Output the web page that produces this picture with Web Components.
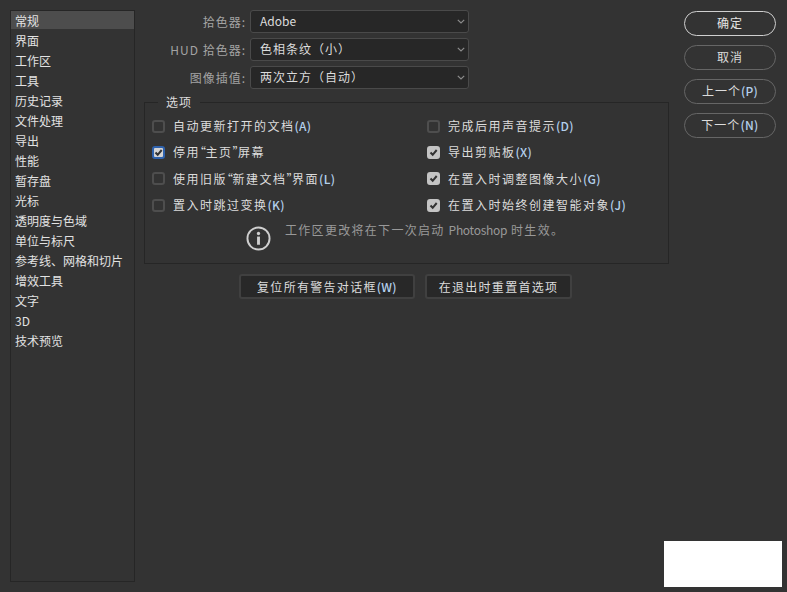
<!DOCTYPE html>
<html lang="zh-CN">
<head>
<meta charset="utf-8">
<title>首选项</title>
<style>
html,body{margin:0;padding:0;height:100%;background:#333}
body{font:12px/16px "Noto Sans CJK SC","Noto Sans",sans-serif;color:#d4d4d4;overflow:hidden}
</style>
</head>
<body>
<pref-dialog>
  <pref-nav slot="nav">
    <pref-nav-item selected>常规</pref-nav-item>
    <pref-nav-item>界面</pref-nav-item>
    <pref-nav-item>工作区</pref-nav-item>
    <pref-nav-item>工具</pref-nav-item>
    <pref-nav-item>历史记录</pref-nav-item>
    <pref-nav-item>文件处理</pref-nav-item>
    <pref-nav-item>导出</pref-nav-item>
    <pref-nav-item>性能</pref-nav-item>
    <pref-nav-item>暂存盘</pref-nav-item>
    <pref-nav-item>光标</pref-nav-item>
    <pref-nav-item>透明度与色域</pref-nav-item>
    <pref-nav-item>单位与标尺</pref-nav-item>
    <pref-nav-item>参考线、网格和切片</pref-nav-item>
    <pref-nav-item>增效工具</pref-nav-item>
    <pref-nav-item>文字</pref-nav-item>
    <pref-nav-item>3D</pref-nav-item>
    <pref-nav-item>技术预览</pref-nav-item>
  </pref-nav>

  <pref-select label="拾色器:" style="--ls:0">Adobe</pref-select>
  <pref-select label="HUD 拾色器:">色相条纹（小）</pref-select>
  <pref-select label="图像插值:">两次立方（自动）</pref-select>

  <pref-group legend="选项">
    <pref-check>自动更新打开的文档<pref-key>(A)</pref-key></pref-check>
    <pref-check>完成后用声音提示<pref-key>(D)</pref-key></pref-check>
    <pref-check checked focused>停用<pref-q>“</pref-q>主页<pref-q>”</pref-q>屏幕</pref-check>
    <pref-check checked>导出剪贴板<pref-key>(X)</pref-key></pref-check>
    <pref-check>使用旧版<pref-q>“</pref-q>新建文档<pref-q>”</pref-q>界面<pref-key>(L)</pref-key></pref-check>
    <pref-check checked>在置入时调整图像大小<pref-key>(G)</pref-key></pref-check>
    <pref-check>置入时跳过变换<pref-key>(K)</pref-key></pref-check>
    <pref-check checked>在置入时始终创建智能对象<pref-key>(J)</pref-key></pref-check>
    <pref-note slot="note">工作区更改将在下一次启动 <pref-latin>Photoshop</pref-latin> 时生效。</pref-note>
  </pref-group>

  <pref-actions>
    <pref-button style="width:176px">复位所有警告对话框<pref-key>(W)</pref-key></pref-button>
    <pref-button style="width:147px">在退出时重置首选项</pref-button>
  </pref-actions>

  <pref-pill slot="side" default>确定</pref-pill>
  <pref-pill slot="side">取消</pref-pill>
  <pref-pill slot="side">上一个<pref-key>(P)</pref-key></pref-pill>
  <pref-pill slot="side">下一个<pref-key>(N)</pref-key></pref-pill>
</pref-dialog>
<script>
function def(name, css, html, init){
  customElements.define(name, class extends HTMLElement{
    constructor(){
      super();
      const r=this.attachShadow({mode:'open'});
      r.innerHTML='<style>'+css+'</style>'+html;
    }
    connectedCallback(){ if(init) init(this,this.shadowRoot); }
  });
}
def('pref-dialog',`
  :host{display:block;position:relative;width:787px;height:592px;background:#333}
  .wrap{display:flex;height:100%;box-sizing:border-box;padding:10px 0 10px 10px}
  main{width:525px;margin-left:9px;display:flex;flex-direction:column}
  .forms{display:flex;flex-direction:column;gap:5px}
  aside{width:92px;margin-left:15px;padding-top:1px;display:flex;flex-direction:column;gap:9.500px}
  .blank{position:absolute;left:664px;top:541px;width:118px;height:46px;background:#fff}
`,`<div class="wrap"><slot name="nav"></slot>
  <main><div class="forms"><slot></slot></div></main>
  <aside><slot name="side"></slot></aside></div><div class="blank"></div>`);

def('pref-nav',`
  :host{display:block;width:125px;height:572px;box-sizing:border-box;border:1px solid #262626;flex:none;padding:0}
`,`<slot></slot>`);

def('pref-nav-item',`
  :host{display:block;height:20px;line-height:20px;padding-left:4px;color:#e2e2e2;font-size:12px;white-space:nowrap;box-sizing:border-box}
  :host([selected]){background:linear-gradient(#4d4d4d 0 18px,transparent 18px)}
`,`<slot></slot>`);

def('pref-select',`
  :host{display:grid;grid-template-columns:102px 219px;column-gap:4px;height:23px;align-items:center}
  .l{text-align:right;color:#a3a3a3;letter-spacing:1px;white-space:nowrap}
  .b{height:23px;box-sizing:border-box;border:1px solid #4a4a4a;border-radius:3px;background:#272727;
     display:flex;align-items:center;justify-content:space-between;padding:0 3px 2px 9px;color:#dcdcdc;letter-spacing:var(--ls,1px)}
  svg{display:block;flex:none;margin-top:2px}
`,`<span class="l"></span><div class="b"><span><slot></slot></span>
  <svg width="8" height="5" viewBox="0 0 8 5"><path d="M.8.8 4 4 7.200.8" fill="none" stroke="#8c8c8c" stroke-width="1.200"/></svg></div>`,
  (h,r)=>{r.querySelector('.l').textContent=h.getAttribute('label')});

def('pref-group',`
  :host{display:block}
  fieldset{margin:0;padding:3px 7px 0;border:1px solid #262626;height:170px;box-sizing:border-box;min-width:0;position:relative}
  legend{padding:0 8px;margin-left:6px;color:#dcdcdc;letter-spacing:1px;line-height:16px;font-size:12px}
  .g{display:grid;grid-template-columns:275px 1fr;grid-auto-rows:26.330px}
`,`<fieldset><legend></legend><div class="g"><slot></slot></div><slot name="note"></slot></fieldset>`,
  (h,r)=>{r.querySelector('legend').textContent=h.getAttribute('legend')});

def('pref-check',`
  :host{display:flex;align-items:center;gap:8px;letter-spacing:1.500px;color:#dcdcdc;white-space:nowrap}
  .c{width:13px;height:13px;box-sizing:border-box;border:2px solid #4e4e4e;border-radius:3px;flex:none;display:block}
  :host([checked]) .c{background:#c4c4c4;border-color:#c4c4c4}
  :host([focused]) .c{border-color:#2f62ad;background:#d4d4d4}
  svg{display:none;width:9px;height:9px}
  :host([checked]) svg{display:block}
`,`<span class="c"><svg viewBox="0 0 9 9"><path d="M1.500 4.500 3.700 6.800 7.700 2" fill="none" stroke="#333" stroke-width="2"/></svg></span><span><slot></slot></span>`);

def('pref-key',`:host{display:inline;letter-spacing:.3px;color:#b4d0ec;font-weight:500}`,`<slot></slot>`);
def('pref-q',`:host{display:inline;font-feature-settings:"halt";letter-spacing:-.5px}`,`<slot></slot>`);
def('pref-latin',`:host{display:inline;letter-spacing:-.3px}`,`<slot></slot>`);

def('pref-note',`
  :host{display:flex;align-items:flex-start;gap:14px;margin:8px 0 0 94px;color:#999;letter-spacing:1.300px;white-space:nowrap}
  svg{display:block;flex:none}
  span{margin-top:-4px}
`,`<svg width="25" height="25" viewBox="0 0 26 26"><circle cx="13" cy="13" r="11.500" fill="none" stroke="#cfcfcf" stroke-width="2"/>
  <circle cx="13" cy="7.800" r="1.700" fill="#cfcfcf"/><path d="M13 11v8.500" stroke="#cfcfcf" stroke-width="3"/></svg><span><slot></slot></span>`);

def('pref-actions',`:host{display:flex;gap:10px;margin:5px 0 0 95px}`,`<slot></slot>`);

def('pref-button',`
  :host{display:flex;align-items:center;justify-content:center;height:25px;box-sizing:border-box;border:2px solid #404040;border-radius:3px;
  background:#282828;color:#dcdcdc;letter-spacing:1.300px;white-space:nowrap}
`,`<span><slot></slot></span>`);

def('pref-pill',`
  :host{display:flex;align-items:center;justify-content:center;height:24.500px;box-sizing:border-box;border:1.500px solid #666;border-radius:13px;
  color:#dcdcdc;letter-spacing:1px;white-space:nowrap}
  :host([default]){border-color:#cfcfcf;color:#e4e4e4}
`,`<span><slot></slot></span>`);
</script>
</body>
</html>
